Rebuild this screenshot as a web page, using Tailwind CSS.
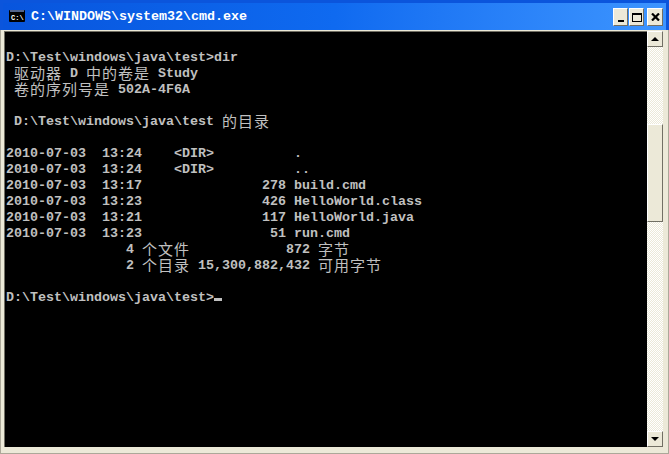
<!DOCTYPE html>
<html lang="en">
<head>
  <meta charset="UTF-8">
  <title>cmd.exe</title>
  <script src="https://cdn.jsdelivr.net/npm/@tailwindcss/browser@4"></script>
</head>
<body class="bg-[#ece9d8]">
  <div class="w-[669px] h-[454px] flex flex-col overflow-hidden">
    <!-- title bar -->
    <div class="h-[30px] shrink-0 flex items-center pl-[6px] pr-[3px] pt-px bg-gradient-to-r from-[#0855dd] via-[#0f6af0] to-[#3d95ff] border-t-[3px] border-x-[3px] border-[#0b55dc]">
      <svg width="16" height="12" viewBox="0 0 16 12" class="shrink-0 -mt-[2px]">
        <rect x="0" y="0" width="16" height="12" rx="1" fill="#000"/>
        <rect x="1" y="0" width="14" height="2" fill="#53658c"/>
        <text x="2" y="9.5" font-family="Liberation Mono" font-size="7" font-weight="700" fill="#fff">C:\</text>
      </svg>
      <span class="ml-[6px] -mt-px text-white font-bold text-[13.33px] leading-4 font-['Liberation_Mono',monospace] whitespace-pre flex-1">C:\WINDOWS\system32\cmd.exe</span>
      <button class="w-[15px] h-[18px] bg-[#ece9d8] border border-white border-r-[#716f64] border-b-[#716f64] flex items-end justify-center pb-[3px]">
        <span class="block w-[6px] h-[2px] bg-black"></span>
      </button>
      <button class="ml-px w-[15px] h-[18px] bg-[#ece9d8] border border-white border-r-[#716f64] border-b-[#716f64] flex items-center justify-center">
        <span class="block w-[10px] h-[9px] border border-black border-t-2"></span>
      </button>
      <button class="ml-[3px] w-[16px] h-[18px] bg-[#ece9d8] border border-white border-r-[#716f64] border-b-[#716f64] flex items-center justify-center">
        <svg width="9" height="8" viewBox="0 0 9 8"><path d="M1 0.5l7 7M8 0.5l-7 7" stroke="#000" stroke-width="2.2" fill="none"/></svg>
      </button>
    </div>
    <!-- client area -->
    <div class="flex-1 min-h-0 flex pl-[3px] pr-[5px] pt-px pb-[6px] border-x border-b border-[#aca899]">
      <div class="flex-1 min-w-0 bg-black text-[#c0c0c0] font-bold text-[13.33px] leading-4 font-['Liberation_Mono',monospace] pt-[18px] pl-px border-l border-t border-[#716f64]">
        <div class="h-4 whitespace-pre">D:\Test\windows\java\test&gt;dir</div>
        <div class="h-4 whitespace-pre"> <span class="inline-block h-4 align-top text-[15px] leading-[14px] tracking-[1px] font-normal font-['Noto_Sans_CJK_SC',sans-serif]">驱动器</span> D <span class="inline-block h-4 align-top text-[15px] leading-[14px] tracking-[1px] font-normal font-['Noto_Sans_CJK_SC',sans-serif]">中的卷是</span> Study</div>
        <div class="h-4 whitespace-pre"> <span class="inline-block h-4 align-top text-[15px] leading-[14px] tracking-[1px] font-normal font-['Noto_Sans_CJK_SC',sans-serif]">卷的序列号是</span> 502A-4F6A</div>
        <div class="h-4"></div>
        <div class="h-4 whitespace-pre"> D:\Test\windows\java\test <span class="inline-block h-4 align-top text-[15px] leading-[14px] tracking-[1px] font-normal font-['Noto_Sans_CJK_SC',sans-serif]">的目录</span></div>
        <div class="h-4"></div>
        <div class="h-4 whitespace-pre">2010-07-03  13:24    &lt;DIR&gt;          .</div>
        <div class="h-4 whitespace-pre">2010-07-03  13:24    &lt;DIR&gt;          ..</div>
        <div class="h-4 whitespace-pre">2010-07-03  13:17               278 build.cmd</div>
        <div class="h-4 whitespace-pre">2010-07-03  13:23               426 HelloWorld.class</div>
        <div class="h-4 whitespace-pre">2010-07-03  13:21               117 HelloWorld.java</div>
        <div class="h-4 whitespace-pre">2010-07-03  13:23                51 run.cmd</div>
        <div class="h-4 whitespace-pre">               4 <span class="inline-block h-4 align-top text-[15px] leading-[14px] tracking-[1px] font-normal font-['Noto_Sans_CJK_SC',sans-serif]">个文件</span>            872 <span class="inline-block h-4 align-top text-[15px] leading-[14px] tracking-[1px] font-normal font-['Noto_Sans_CJK_SC',sans-serif]">字节</span></div>
        <div class="h-4 whitespace-pre">               2 <span class="inline-block h-4 align-top text-[15px] leading-[14px] tracking-[1px] font-normal font-['Noto_Sans_CJK_SC',sans-serif]">个目录</span> 15,300,882,432 <span class="inline-block h-4 align-top text-[15px] leading-[14px] tracking-[1px] font-normal font-['Noto_Sans_CJK_SC',sans-serif]">可用字节</span></div>
        <div class="h-4"></div>
        <div class="h-4 whitespace-pre">D:\Test\windows\java\test&gt;<span class="inline-block w-2 h-[3px] bg-[#c0c0c0]"></span></div>
      </div>
      <!-- scrollbar -->
      <div class="w-[16px] shrink-0 flex flex-col bg-[repeating-conic-gradient(#ece9d8_0_25%,#fff_0_50%)] bg-[length:2px_2px]">
        <button class="h-[16px] shrink-0 bg-[#ece9d8] border border-white border-r-[#716f64] border-b-[#716f64] flex items-center justify-center">
          <span class="block w-0 h-0 border-x-[4px] border-x-transparent border-b-[4px] border-b-black"></span>
        </button>
        <div class="mt-[77px] h-[98px] shrink-0 bg-[#ece9d8] border border-white border-r-[#716f64] border-b-[#716f64]"></div>
        <div class="flex-1"></div>
        <button class="h-[16px] shrink-0 bg-[#ece9d8] border border-white border-r-[#716f64] border-b-[#716f64] flex items-center justify-center">
          <span class="block w-0 h-0 border-x-[4px] border-x-transparent border-t-[4px] border-t-black"></span>
        </button>
      </div>
    </div>
  </div>
</body>
</html>
